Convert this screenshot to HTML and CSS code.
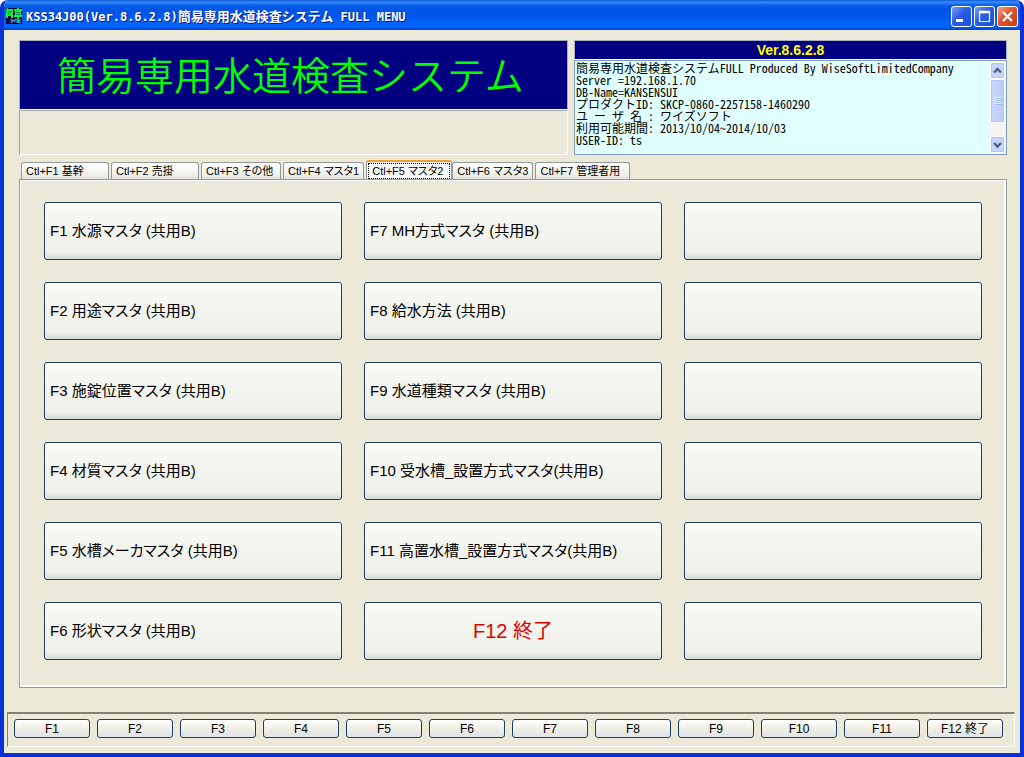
FILE: index.html
```html
<!DOCTYPE html>
<html lang="ja">
<head>
<meta charset="utf-8">
<meta name="viewport" content="width=device-width, initial-scale=1">
<title>簡易専用水道検査システム FULL MENU</title>
<link rel="stylesheet" href="styles.css">
</head>
<body>
<div class="window">
  <header class="titlebar">
    <svg class="app-icon" viewBox="0 0 16 16" aria-hidden="true">
      <rect width="16" height="16" fill="#003"/>
      <path d="M0 2l1-2h1v1h5v9H5V8H2v2H0zM8 1h3V0h2v1h3v2h-1v4h1v2h-3v2h-2V9H8V7h1V3H8z" fill="#1e4"/>
      <path d="M1 3.5h5M2 5.5h3M10 4.5h4M10 6.5h4" stroke="#064" stroke-width=".7"/>
      <path d="M4 12h4M7 12l-2 3M10 11l-2 3M10 12h4l-3 2 4 1" fill="none" stroke="#4ce" stroke-width="1.2"/>
    </svg>
    <h1 class="caption"><span class="caption-latin">KSS34J00(Ver.8.6.2.8)</span>簡易専用水道検査システム<span class="caption-latin"> FULL MENU</span></h1>
    <div class="window-buttons">
      <button class="win-btn" type="button" aria-label="最小化"><svg viewBox="0 0 19 19"><path d="M4 13.5h7" stroke="#fff" stroke-width="3"/></svg></button>
      <button class="win-btn" type="button" aria-label="最大化"><svg viewBox="0 0 19 19"><path d="M4.5 4.5h10v10h-10z" fill="none" stroke="#fff" stroke-width="1.2"/><path d="M4 5h11" stroke="#fff" stroke-width="2.5"/></svg></button>
      <button class="win-btn close" type="button" aria-label="閉じる"><svg viewBox="0 0 19 19"><path d="M5 5l9 9M14 5l-9 9" stroke="#fff" stroke-width="2.2"/></svg></button>
    </div>
  </header>

  <main class="content">
    <section class="top">
      <div class="brand">
        <h2 class="brand-title">簡易専用水道検査システム</h2>
        <div class="message"></div>
      </div>
      <div class="info">
        <label class="version" for="info-text">Ver.8.6.2.8</label>
        <div class="info-box">
          <textarea class="info-text" id="info-text" readonly spellcheck="false" wrap="off">簡易専用水道検査システムFULL Produced By WiseSoftLimitedCompany
Server =192.168.1.70
DB-Name=KANSENSUI
プロダクトID: SKCP-0860-2257158-1460290
ユ ー ザ 名 : ワイズソフト
利用可能期間: 2013/10/04〜2014/10/03
USER-ID: ts</textarea>
          <div class="scrollbar">
            <button class="scroll-btn" type="button" aria-label="上へ"><svg viewBox="0 0 13 13"><path d="M3 8.5l3.5-3.5L10 8.5" fill="none" stroke="#4d6185" stroke-width="2.4"/></svg></button>
            <div class="thumb"><svg viewBox="0 0 8 8"><path d="M0 .5h7M0 2.5h7M0 4.5h7M0 6.5h7" stroke="#eef4fe"/><path d="M1 1.5h7M1 3.5h7M1 5.5h7M1 7.5h7" stroke="#8cb0f8" stroke-opacity=".7"/></svg></div>
            <div class="track"></div>
            <button class="scroll-btn" type="button" aria-label="下へ"><svg viewBox="0 0 13 13"><path d="M3 5l3.5 3.5L10 5" fill="none" stroke="#4d6185" stroke-width="2.4"/></svg></button>
          </div>
        </div>
      </div>
    </section>

    <div class="tabs" role="tablist">
      <button class="tab wide" type="button" role="tab">Ctl+F1 基幹</button>
      <button class="tab wide" type="button" role="tab">Ctl+F2 売掛</button>
      <button class="tab" type="button" role="tab">Ctl+F3 その他</button>
      <button class="tab" type="button" role="tab">Ctl+F4 マスタ1</button>
      <button class="tab active" type="button" role="tab" aria-selected="true"><span class="tab-focus">Ctl+F5 マスタ2</span></button>
      <button class="tab" type="button" role="tab">Ctl+F6 マスタ3</button>
      <button class="tab last" type="button" role="tab">Ctl+F7 管理者用</button>
    </div>

    <section class="panel" role="tabpanel">
      <button class="menu-btn" type="button">F1 水源マスタ (共用B)</button>
      <button class="menu-btn" type="button">F2 用途マスタ (共用B)</button>
      <button class="menu-btn" type="button">F3 施錠位置マスタ (共用B)</button>
      <button class="menu-btn" type="button">F4 材質マスタ (共用B)</button>
      <button class="menu-btn" type="button">F5 水槽メーカマスタ (共用B)</button>
      <button class="menu-btn" type="button">F6 形状マスタ (共用B)</button>
      <button class="menu-btn" type="button">F7 MH方式マスタ (共用B)</button>
      <button class="menu-btn" type="button">F8 給水方法 (共用B)</button>
      <button class="menu-btn" type="button">F9 水道種類マスタ (共用B)</button>
      <button class="menu-btn" type="button">F10 受水槽_設置方式マスタ(共用B)</button>
      <button class="menu-btn" type="button">F11 高置水槽_設置方式マスタ(共用B)</button>
      <button class="menu-btn exit" type="button">F12 終了</button>
      <button class="menu-btn" type="button"></button>
      <button class="menu-btn" type="button"></button>
      <button class="menu-btn" type="button"></button>
      <button class="menu-btn" type="button"></button>
      <button class="menu-btn" type="button"></button>
      <button class="menu-btn" type="button"></button>
    </section>
  </main>

  <footer class="function-bar">
    <button class="fn-btn" type="button">F1</button>
    <button class="fn-btn" type="button">F2</button>
    <button class="fn-btn" type="button">F3</button>
    <button class="fn-btn" type="button">F4</button>
    <button class="fn-btn" type="button">F5</button>
    <button class="fn-btn" type="button">F6</button>
    <button class="fn-btn" type="button">F7</button>
    <button class="fn-btn" type="button">F8</button>
    <button class="fn-btn" type="button">F9</button>
    <button class="fn-btn" type="button">F10</button>
    <button class="fn-btn" type="button">F11</button>
    <button class="fn-btn" type="button">F12 終了</button>
  </footer>
</div>
</body>
</html>
```
FILE: styles.css
```css
* {
  box-sizing: border-box;
}

body {
  margin: 0;
  background: #fff;
  color: #000;
  font: 12px/16px "Liberation Sans", "Noto Sans CJK JP", sans-serif;
  font-feature-settings: "palt";
}

button {
  padding: 0;
  color: inherit;
  font: inherit;
  font-feature-settings: inherit;
}

.window {
  display: flex;
  flex-direction: column;
  min-height: 100vh;
  border: solid #0831d9;
  border-width: 0 4px 4px;
  border-radius: 8px 8px 0 0;
  background: #ece9d8;
  overflow: hidden;
}

.titlebar {
  display: flex;
  align-items: center;
  gap: 4px;
  height: 30px;
  margin: 0 -4px;
  padding: 2px 6px 0;
  background: linear-gradient(#0958d8 0, #3a8df8 2px, #0a62ea 5px, #0054e3 10px, #0058ee 18px, #0566fc 25px, #0260f8 27px, #0041c8 30px);
}

.app-icon {
  width: 16px;
  height: 16px;
}

.caption {
  flex: 1;
  margin: 0;
  color: #fff;
  font: bold 13px/20px "Noto Sans CJK JP", sans-serif;
  font-feature-settings: normal;
  text-shadow: 1px 1px #0a1883;
  white-space: pre;
}

.caption-latin {
  font-family: "DejaVu Sans Mono", monospace;
  font-size: 12px;
}

.window-buttons {
  display: flex;
  gap: 2px;
}

.win-btn {
  width: 21px;
  height: 21px;
  border: 1px solid #fff;
  border-radius: 3px;
  background: linear-gradient(135deg, #7d9ef5, #2a5ce6 45%, #1c4fd8);
}

.win-btn.close {
  background: linear-gradient(135deg, #f0a088, #e0532c 45%, #c83c10);
}

.win-btn svg,
.scroll-btn svg {
  display: block;
  width: 100%;
}

.content {
  flex: 1;
  display: flex;
  flex-direction: column;
  padding: 10px 13px 0 15px;
}

.top {
  display: grid;
  grid-template-columns: 549fr 433fr;
  gap: 6px;
}

.brand {
  display: flex;
  flex-direction: column;
}

.brand-title {
  height: 70px;
  margin: 0;
  padding-left: 37px;
  border: 1px solid #a9adc0;
  border-bottom-color: #fff;
  background: #000080;
  color: #0f0;
  font: 350 39px/64px "Noto Sans CJK JP", sans-serif;
  font-feature-settings: normal;
  white-space: nowrap;
}

.message {
  flex: 1;
  border: 1px solid #aca899;
  border-color: #a5acb2 #fff #fff #aca899;
}

.info {
  display: flex;
  flex-direction: column;
}

.version {
  height: 20px;
  border: 1px solid #a9adc0;
  border-bottom-color: #fff;
  background: #000080;
  color: #ff0;
  font: bold 14px/18px "Liberation Sans", sans-serif;
  text-align: center;
}

.info-box {
  display: flex;
  height: 95px;
  border: 1px solid #7f9db9;
  background: #e0ffff;
}

.info-text {
  flex: 1;
  min-width: 0;
  margin: 0;
  padding: 1px;
  border: 0;
  outline: 0;
  background: transparent;
  color: #000;
  font: 12px/12px "Noto Sans CJK JP", sans-serif;
  font-feature-settings: "hwid";
  resize: none;
  overflow: hidden;
}

.scrollbar {
  display: flex;
  flex-direction: column;
  width: 17px;
  padding: 1px;
  background: #f5f5f0;
}

.scroll-btn {
  height: 17px;
  border: 1px solid #fff;
  border-radius: 2px;
  background: #c4d4fc;
  box-shadow: inset 0 0 0 1px #b4c6f4;
}

.thumb {
  display: flex;
  align-items: center;
  justify-content: center;
  height: 44px;
  border: 1px solid #fff;
  border-radius: 2px;
  background: linear-gradient(90deg, #c9d8fc, #bacbf7);
  box-shadow: inset 0 0 0 1px #b4c6f4;
}

.thumb svg {
  width: 8px;
}

.track {
  flex: 1;
}

.tabs {
  display: flex;
  align-items: flex-end;
  gap: 2px;
  height: 24px;
  padding-left: 2px;
}

.tab {
  min-width: 80px;
  height: 17px;
  padding: 0 4px;
  border: 1px solid #919b9c;
  border-bottom: 0;
  border-radius: 3px 3px 0 0;
  background: linear-gradient(#fff, #f1f1ea 70%, #e3e2da);
  font-size: 11px;
  line-height: 16px;
  text-align: left;
  white-space: nowrap;
}

.tab.wide {
  min-width: 88px;
}

.tab.last {
  min-width: 95px;
}

.tab.active {
  min-width: 86px;
  height: 19px;
  margin-right: -2px;
  padding: 0 1px;
  border-top: 2px solid #f0a030;
  background: #fcfcfe;
}

.tab-focus {
  display: block;
  height: 16px;
  padding: 0 3px;
  border: 1px dotted #000;
  line-height: 14px;
}

.panel {
  display: grid;
  grid-template-columns: repeat(3, 1fr);
  grid-template-rows: repeat(6, 58px);
  grid-auto-flow: column;
  gap: 22px;
  padding: 22px 24px 27px;
  border: 1px solid #919b9c;
  box-shadow: inset 1px 1px #fcfcfe, inset -2px -2px #fcfcfe;
}

.menu-btn {
  padding: 0 5px;
  border: 1px solid #1c3f5c;
  border-radius: 3px;
  background: linear-gradient(#fff, #f7f7f3 15%, #f0f0ea 88%, #d6dcd8);
  font-size: 15px;
  line-height: 20px;
  text-align: left;
  white-space: nowrap;
}

.menu-btn.exit {
  color: #e00000;
  font-size: 20px;
  text-align: center;
}

.function-bar {
  display: grid;
  grid-template-columns: repeat(12, 1fr);
  gap: 7px;
  margin: 0 5px 6px 3px;
  padding: 5px 11px 8px 6px;
  border: 1px solid #fff;
  border-top: 2px solid #858070;
  border-left-color: #858070;
}

.fn-btn {
  height: 19px;
  border: 1px solid #1c3f6c;
  border-radius: 3px;
  background: linear-gradient(#fff, #f0eee4 50%, #dfe4ea);
  line-height: 16px;
  white-space: nowrap;
}
```
